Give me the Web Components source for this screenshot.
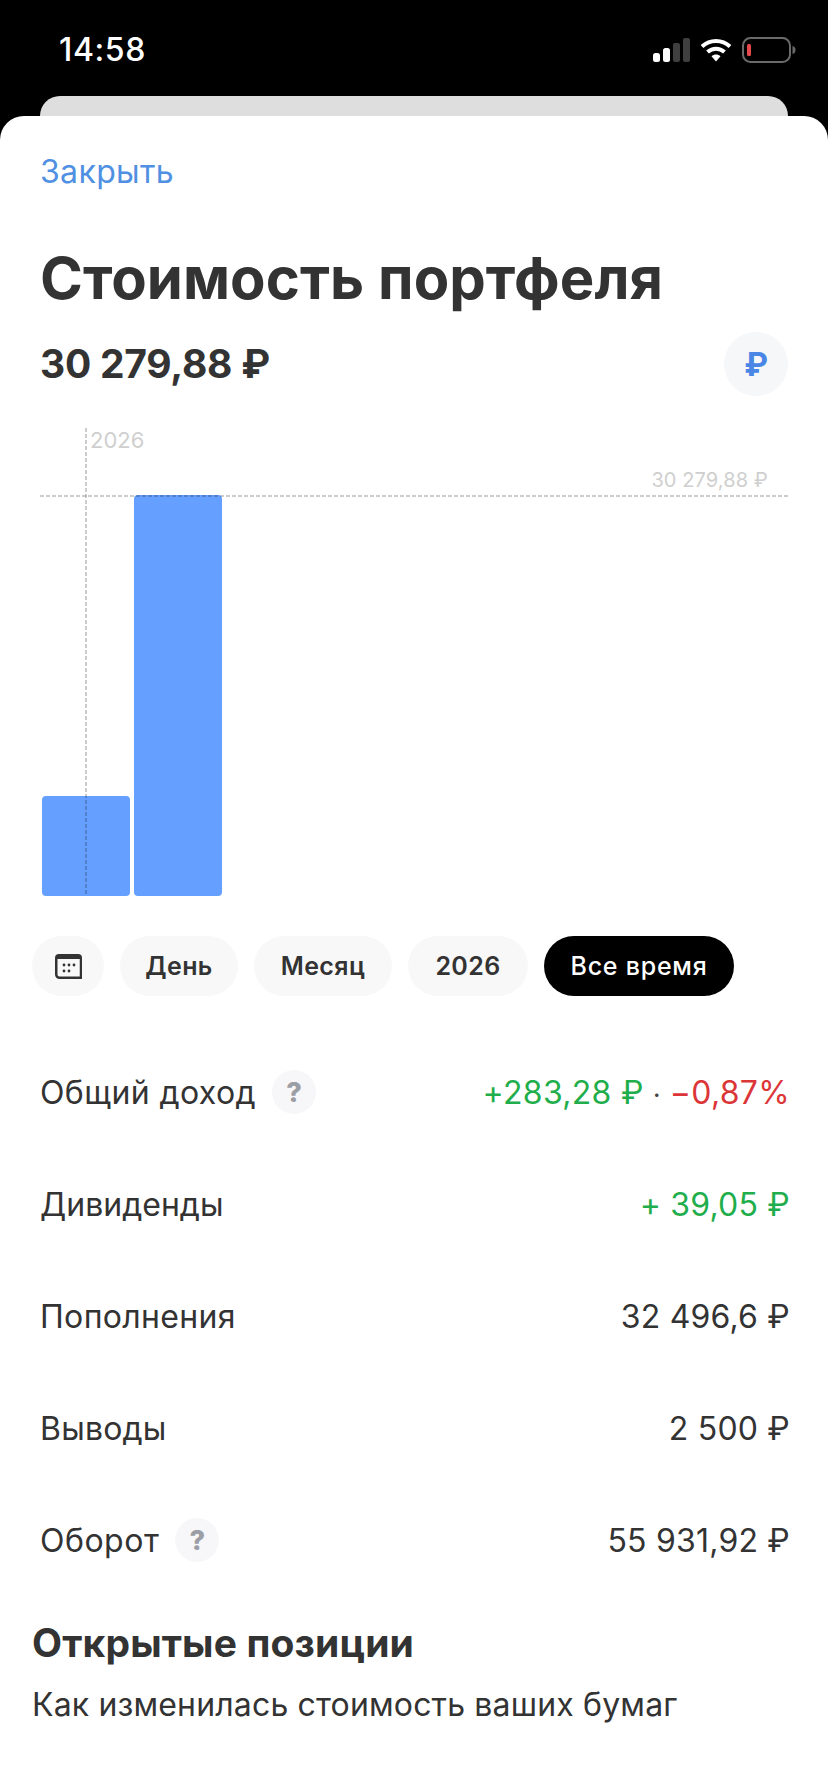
<!DOCTYPE html>
<html lang="ru">
<head>
<meta charset="utf-8">
<title>Стоимость портфеля</title>
<style>
  html, body { margin: 0; padding: 0; background: #000; }
  body { width: 828px; height: 1792px; overflow: hidden; font-family: Inter, "Noto Sans", sans-serif; color: #333; display: flex; flex-direction: column; }
</style>
</head>
<body>
<status-bar time="14:58"></status-bar>
<peek-card></peek-card>
<sheet-card>
  <close-link>Закрыть</close-link>
  <portfolio-head title-text="Стоимость портфеля" amount="30 279,88 ₽"></portfolio-head>
  <bar-chart label="2026" max-label="30 279,88 ₽"></bar-chart>
  <period-bar>
    <period-pill icon></period-pill>
    <period-pill w="118">День</period-pill>
    <period-pill w="138">Месяц</period-pill>
    <period-pill w="120">2026</period-pill>
    <period-pill w="190" active>Все время</period-pill>
  </period-bar>
  <stat-list>
    <stat-row help>
      <span slot="label" style="letter-spacing:.4px">Общий доход</span>
      <span style="color:#1fae4b;letter-spacing:.3px">+283,28 ₽</span>
      <span style="font-size:26px;color:#444">·</span>
      <span style="color:#dc3538;letter-spacing:.3px">−0,87%</span>
    </stat-row>
    <stat-row><span slot="label">Дивиденды</span><span style="color:#1fae4b">+ 39,05 ₽</span></stat-row>
    <stat-row><span slot="label" style="letter-spacing:.34px">Пополнения</span>32 496,6 ₽</stat-row>
    <stat-row><span slot="label" style="letter-spacing:.2px">Выводы</span>2 500 ₽</stat-row>
    <stat-row help><span slot="label" style="letter-spacing:.5px">Оборот</span>55 931,92 ₽</stat-row>
  </stat-list>
  <section-head sub="Как изменилась стоимость ваших бумаг">Открытые позиции</section-head>
</sheet-card>

<script>
// small helper, every element gets an open shadow root
function shadow(el, html) {
  el.attachShadow({ mode: "open" }).innerHTML = html;
}

class StatusBar extends HTMLElement {
  connectedCallback() {
    shadow(this, `
    <style>
      :host { display: flex; height: 96px; flex: none; align-items: flex-start; justify-content: space-between; padding: 30px 32px 0 59px; box-sizing: border-box; color: #fff; }
      .time { font-size: 32px; line-height: 40px; font-weight: 500; letter-spacing: .6px; }
      .icons { display: flex; gap: 10px; margin-top: 7px; align-items: flex-start; }
      svg { display: block; }
    </style>
    <div class="time">${this.getAttribute("time")}</div>
    <div class="icons">
      <svg width="38" height="25" viewBox="0 0 38 25">
        <rect x="1" y="16" width="7" height="9" rx="2.5" fill="#fff"/>
        <rect x="11" y="11" width="7" height="14" rx="2.5" fill="#fff"/>
        <rect x="21" y="6" width="7" height="19" rx="2" fill="#3f3f3f"/>
        <rect x="31" y="1" width="7" height="24" rx="2" fill="#3f3f3f"/>
      </svg>
      <svg width="32" height="25" viewBox="0 0 32 25" fill="none" stroke="#fff" stroke-width="4">
        <path d="M2 9.5C10 2 22 2 30 9.5"/>
        <path d="M7.500 15C12.500 10.500 19.500 10.500 24.500 15"/>
        <path d="M11.500 19.200 16 24.500 20.500 19.200C18 17 14 17 11.500 19.200Z" fill="#fff" stroke="none"/>
      </svg>
      <svg width="54" height="26" viewBox="0 0 54 26" fill="none">
        <rect x="1" y="1" width="47" height="24" rx="7.500" stroke="#6a6a6a" stroke-width="2"/>
        <rect x="5" y="7" width="4" height="12" rx="1.500" fill="#e5484a"/>
        <path d="M50.500 9C52.500 9.500 53.500 11 53.500 13S52.500 16.500 50.500 17Z" fill="#6a6a6a"/>
      </svg>
    </div>`);
  }
}

class PeekCard extends HTMLElement {
  connectedCallback() {
    shadow(this, `<style>
      :host { display: block; flex: none; height: 20px; margin: 0 40px; background: #dedede; border-radius: 20px 20px 0 0; }
    </style>`);
  }
}

class SheetCard extends HTMLElement {
  connectedCallback() {
    shadow(this, `<style>
      :host { display: flex; flex-direction: column; flex: 1; background: #fff; border-radius: 24px 24px 0 0; }
    </style><slot></slot>`);
  }
}

class CloseLink extends HTMLElement {
  connectedCallback() {
    shadow(this, `<style>
      :host { display: block; padding: 34px 40px 0; height: 74px; box-sizing: border-box; font-size: 32px; line-height: 44px; color: #5090e2; letter-spacing: .35px; }
    </style><slot></slot>`);
  }
}

class PortfolioHead extends HTMLElement {
  connectedCallback() {
    shadow(this, `<style>
      :host { display: block; padding: 0 40px; }
      h1 { margin: 0; font-size: 58px; line-height: 72px; font-weight: 700; letter-spacing: .05px; padding-top: 52px; }
      .line { display: flex; justify-content: space-between; align-items: center; margin-top: 18px; }
      .sum { font-size: 39px; font-weight: 700; line-height: 64px; letter-spacing: -.25px; }
      .cur { width: 64px; height: 64px; border-radius: 50%; background: #f6f7f9; color: #4a86e6; font-size: 32px; font-weight: 700; display: flex; align-items: center; justify-content: center; }
    </style>
    <h1>${this.getAttribute("title-text")}</h1>
    <div class="line">
      <div class="sum">${this.getAttribute("amount")}</div>
      <div class="cur">₽</div>
    </div>`);
  }
}

class BarChart extends HTMLElement {
  connectedCallback() {
    shadow(this, `<style>
      :host { display: block; position: relative; height: 468px; margin: 32px 40px 0; }
      .bars { display: flex; align-items: flex-end; gap: 4px; height: 100%; padding-left: 2px; box-sizing: border-box; }
      .bar { width: 88px; background: #659fff; border-radius: 4px; }
      .v { position: absolute; left: 45px; top: 0; bottom: 0; width: 2px; background: repeating-linear-gradient(to bottom, rgba(0,0,0,.2) 0 4px, transparent 4px 6px); }
      .h { position: absolute; left: 0; right: 0; top: 67px; height: 2px; background: repeating-linear-gradient(to right, rgba(0,0,0,.2) 0 4px, transparent 4px 6px); }
      .t { position: absolute; line-height: 26px; color: #cfcfcf; }
      .year { left: 50px; top: -1px; font-size: 22px; }
      .max { right: 20px; top: 39px; font-size: 20px; letter-spacing: .1px; }
    </style>
    <div class="bars">
      <div class="bar" style="height:100px"></div>
      <div class="bar" style="height:401px"></div>
    </div>
    <div class="v"></div>
    <div class="h"></div>
    <div class="t year">${this.getAttribute("label")}</div>
    <div class="t max">${this.getAttribute("max-label")}</div>`);
  }
}

class PeriodBar extends HTMLElement {
  connectedCallback() {
    shadow(this, `<style>
      :host { display: flex; gap: 16px; padding: 40px 32px 0; }
    </style><slot></slot>`);
  }
}

class PeriodPill extends HTMLElement {
  connectedCallback() {
    const active = this.hasAttribute("active");
    const cal = `<svg width="27" height="25" viewBox="0 0 27 25">
      <path d="M1.250 4v16.500a3.250 3.250 0 0 0 3.250 3.250H26V4" fill="none" stroke="#333" stroke-width="2.500"/>
      <path d="M26.250 4V24" fill="none" stroke="#333" stroke-width="1.500"/>
      <path d="M0 4a4 4 0 0 1 4-4H23a4 4 0 0 1 4 4V5H0Z" fill="#333"/>
      <g fill="#333"><circle cx="9" cy="11" r="1.400"/><circle cx="14" cy="11" r="1.400"/><circle cx="19" cy="11" r="1.400"/><circle cx="9" cy="17" r="1.400"/><circle cx="14" cy="17" r="1.400"/></g>
    </svg>`;
    const w = this.hasAttribute("icon") ? 72 : this.getAttribute("w");
    shadow(this, `<style>
      :host { display: flex; align-items: center; justify-content: center; flex: none; width: ${w}px; height: 60px; border-radius: 30px; background: ${active ? "#000" : "#f8f8f8"}; color: ${active ? "#fff" : "#333"}; font-size: 25px; font-weight: ${active ? 500 : 600}; letter-spacing: ${active ? .75 : .4}px; }
      svg { display: block; }
    </style>${this.hasAttribute("icon") ? cal : "<slot></slot>"}`);
  }
}

class StatList extends HTMLElement {
  connectedCallback() {
    shadow(this, `<style>
      :host { display: block; padding: 40px 40px 0; }
    </style><slot></slot>`);
  }
}

class StatRow extends HTMLElement {
  connectedCallback() {
    shadow(this, `<style>
      :host { display: flex; align-items: center; justify-content: space-between; height: 112px; font-size: 32px; color: #333; }
      .l { display: flex; align-items: center; gap: 16px; }
      .v { margin-right: -2px; letter-spacing: .2px; }
    </style>
    <div class="l"><slot name="label"></slot>${this.hasAttribute("help") ? "<help-badge></help-badge>" : ""}</div>
    <div class="v"><slot></slot></div>`);
  }
}

class HelpBadge extends HTMLElement {
  connectedCallback() {
    shadow(this, `<style>
      :host { display: flex; align-items: center; justify-content: center; width: 44px; height: 44px; border-radius: 50%; background: #f7f7f9; color: #9c9ea6; font-size: 27px; font-weight: 800; }
    </style>?`);
  }
}

class SectionHead extends HTMLElement {
  connectedCallback() {
    shadow(this, `<style>
      :host { display: block; padding: 21px 32px 0; }
      h2 { margin: 0; font-size: 39px; line-height: 52px; font-weight: 700; letter-spacing: .15px; }
      p { margin: 14px 0 0; font-size: 32px; line-height: 44px; letter-spacing: .16px; }
    </style>
    <h2><slot></slot></h2>
    <p>${this.getAttribute("sub")}</p>`);
  }
}

customElements.define("status-bar", StatusBar);
customElements.define("peek-card", PeekCard);
customElements.define("sheet-card", SheetCard);
customElements.define("close-link", CloseLink);
customElements.define("portfolio-head", PortfolioHead);
customElements.define("bar-chart", BarChart);
customElements.define("period-bar", PeriodBar);
customElements.define("period-pill", PeriodPill);
customElements.define("stat-list", StatList);
customElements.define("stat-row", StatRow);
customElements.define("help-badge", HelpBadge);
customElements.define("section-head", SectionHead);
</script>
</body>
</html>
